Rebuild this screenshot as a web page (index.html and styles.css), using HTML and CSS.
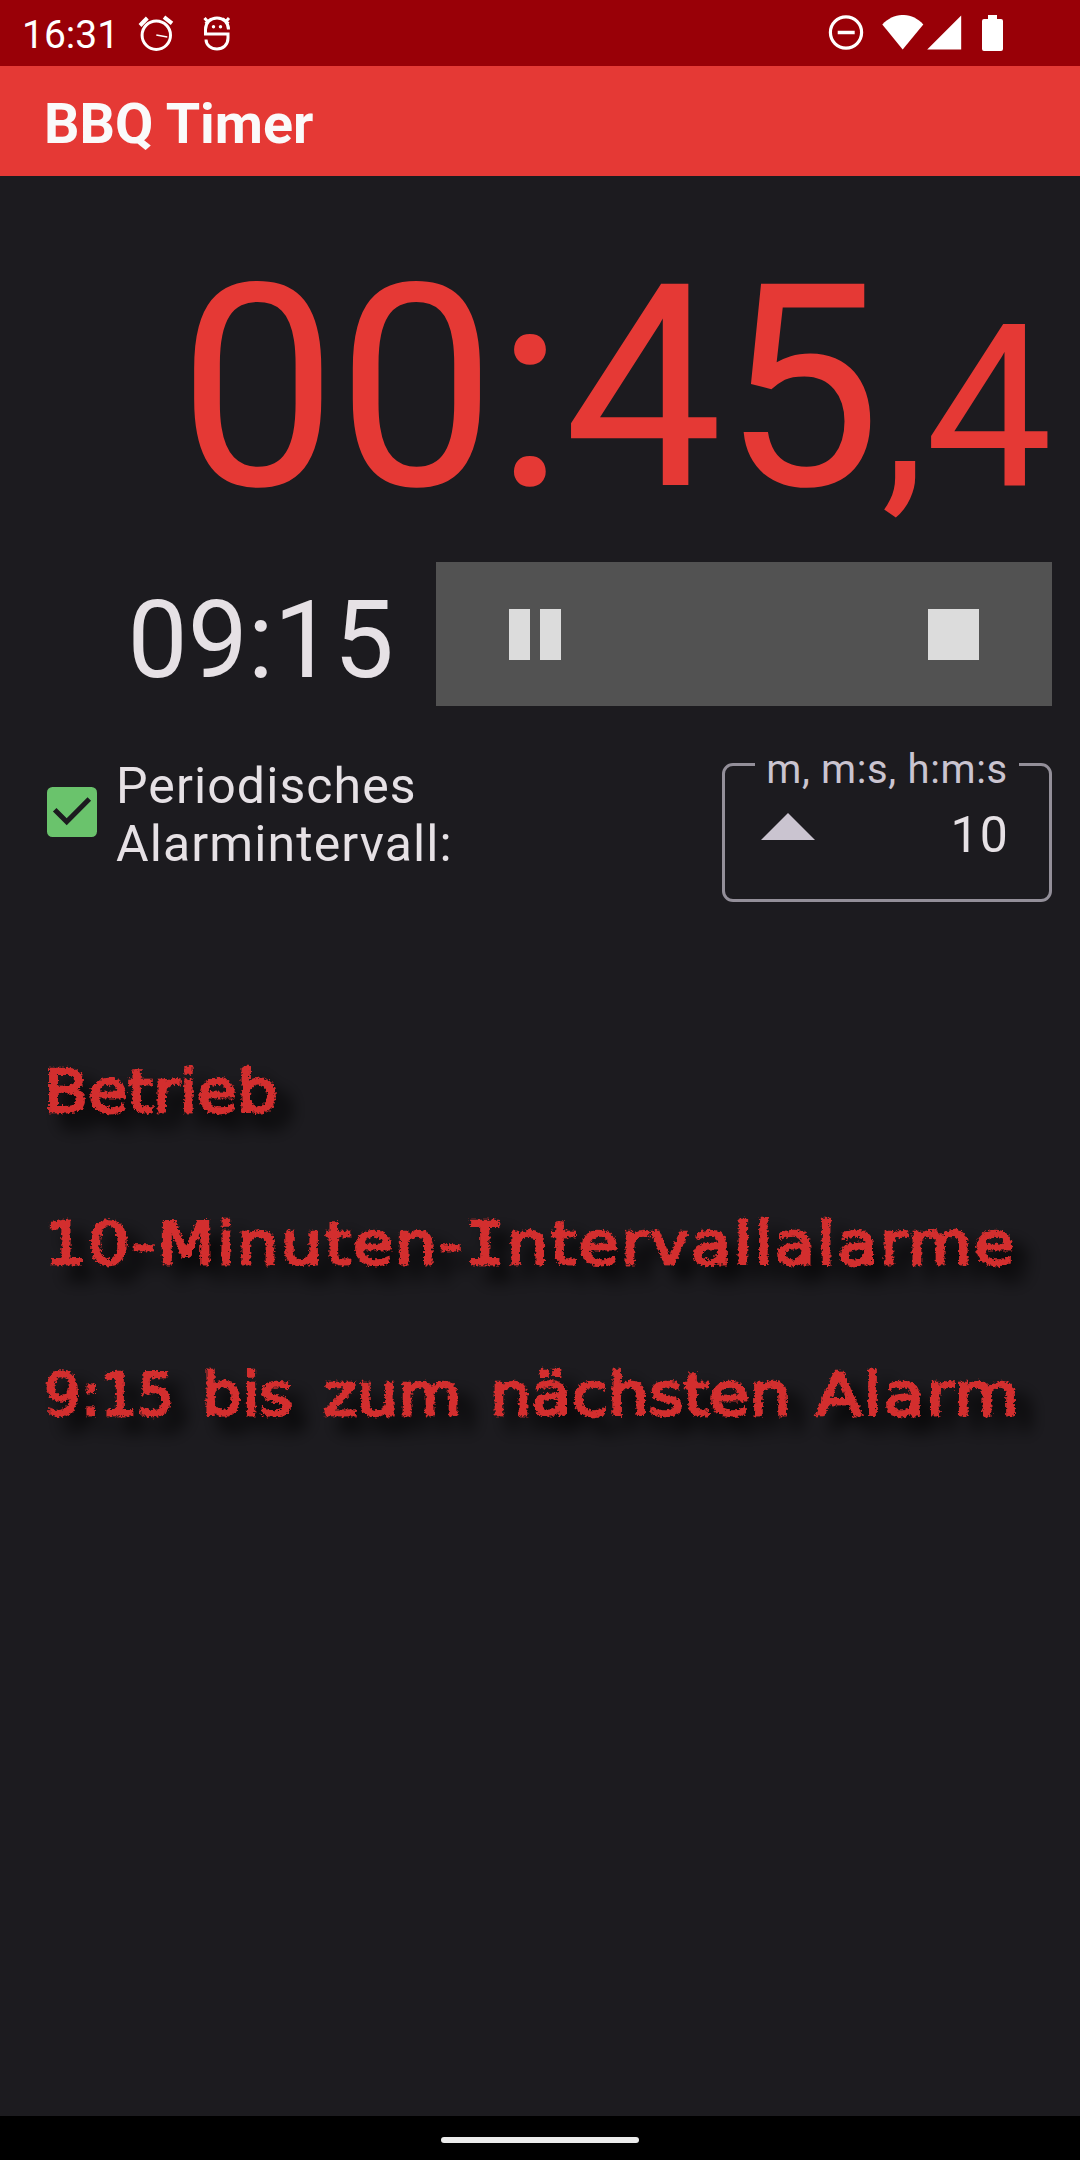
FILE: index.html
```html
<!DOCTYPE html>
<html lang="de">
<head>
<meta charset="utf-8">
<title>BBQ Timer</title>
<link rel="stylesheet" href="styles.css">
</head>
<body>
<div class="status-bar">
  <span class="clock">16:31</span>
  <svg class="icon-alarm" width="36" height="38" viewBox="0 0 36 38" fill="none" stroke="#fff">
    <circle cx="18.3" cy="20.2" r="14.2" stroke-width="3"/>
    <path d="M2 10.5 9.3 3M26 2.2l8 6.2" stroke-width="4"/>
    <path d="m18.3 20 11 2" stroke-width="1.6"/>
  </svg>
  <svg class="icon-face" width="28" height="38" viewBox="0 0 28 38" fill="none" stroke="#fff" stroke-width="3">
    <path d="M25.5 14.5C25.5 7.5 20.500 3 14 3S2.500 7.500 2.500 14.500V19H25V23C25 30 20 34 14 34S3 30 3 24.500M1.500 3 5 7M26 3l-3.500 4"/>
    <path d="M2 8.300 8 3.200M20 3.200l6 5" stroke-width="1.500"/>
    <circle cx="10.500" cy="11.700" r="1.700" fill="#fff" stroke="none"/>
    <circle cx="17.500" cy="11.700" r="1.700" fill="#fff" stroke="none"/>
  </svg>
  <svg class="icon-dnd" width="36" height="36" viewBox="0 0 36 36" fill="none" stroke="#fff" stroke-width="3.2">
    <circle cx="18" cy="17.500" r="15.6"/><path d="M9.700 17.500h17" stroke-width="3.500"/>
  </svg>
  <svg class="icon-wifi" width="42" height="35" viewBox="0 0 42 35" fill="#fff"><path d="M.3 9.500C12-3.200 30-3.200 41.300 9.500L20.700 34.500Z"/></svg>
  <svg class="icon-signal" width="35" height="35" viewBox="0 0 35 35" fill="#fff"><path d="M34.200.5V34.500H.2Z"/></svg>
  <svg class="icon-battery" width="21" height="36" viewBox="0 0 21 36" fill="#fff"><path d="M6 0h9v4h4q2 0 2 2v28q0 2-2 2H2q-2 0-2-2V6q0-2 2-2h4Z"/></svg>
</div>
<header class="app-bar"><h1>BBQ Timer</h1></header>
<main>
  <div class="stopwatch">00:45<span class="tenths">,4</span></div>
  <div class="countdown-row">
    <div class="countdown">09:15</div>
    <div class="controls">
      <svg width="52" height="51" viewBox="0 0 52 51" fill="#dcdcdc"><path d="M0 0h21v51H0zM31 0h21v51H31z"/></svg>
      <svg width="51" height="51" viewBox="0 0 51 51" fill="#dcdcdc"><path d="M0 0h51v51H0z"/></svg>
    </div>
  </div>
  <div class="interval-row">
    <svg class="checkbox" width="50" height="50" viewBox="0 0 50 50">
      <rect width="50" height="50" rx="5.500" fill="#6ac36c"/>
      <path d="M7.700 22.700 19.700 34.700 42.300 12" fill="none" stroke="#1c1b1f" stroke-width="5"/>
    </svg>
    <div class="interval-label">Periodisches<br>Alarmintervall:</div>
    <div class="interval-field">
      <span class="field-label">m, m:s, h:m:s</span>
      <svg width="54" height="27" viewBox="0 0 54 27" fill="#cac4d0"><path d="M27 0 54 27H0Z"/></svg>
      <span class="field-value">10</span>
    </div>
  </div>
  <div class="notes">
    <p><span class="w1">Betrieb</span></p>
    <p><span class="w2">10-Minuten-<span class="slab">I</span>ntervallalarme</span></p>
    <p><span class="w3">9:15</span><span class="w4">bis</span><span class="w5">zum</span><span class="w6">nächsten</span><span class="w7">Alarm</span></p>
  </div>
</main>
<div class="nav-bar"><div class="nav-pill"></div></div>
<svg class="defs" width="0" height="0">
  <filter id="chalk" x="-5%" y="-30%" width="110%" height="180%">
    <feTurbulence type="fractalNoise" baseFrequency="0.35" numOctaves="2" seed="4" result="grain"/>
    <feDisplacementMap in="SourceGraphic" in2="grain" scale="6" xChannelSelector="R" yChannelSelector="G" result="rough"/>
    <feDropShadow in="rough" dx="14" dy="14" stdDeviation="8.500" flood-color="#000" flood-opacity="1"/>
  </filter>
</svg>
</body>
</html>
```
FILE: styles.css
```css
* { box-sizing: border-box; }
body {
  margin: 0;
  width: 1080px;
  height: 2160px;
  display: flex;
  flex-direction: column;
  overflow: hidden;
  background: #1c1b1f;
  color: #e6e1e5;
  font-family: Roboto, sans-serif;
}
svg { display: block; flex: none; }
.status-bar {
  height: 66px;
  flex: none;
  display: flex;
  align-items: flex-start;
  padding: 15px 77px 0 22px;
  background: #990007;
  color: #fff;
}
.clock { width: 116px; font-size: 39px; line-height: 40px; }
.icon-face { margin-left: 29px; }
.icon-dnd { margin-left: auto; }
.icon-wifi { margin-left: 18px; }
.icon-signal { margin-left: 3px; }
.icon-battery { margin-left: 20px; }
.app-bar {
  height: 110px;
  flex: none;
  padding: 3px 0 0 44px;
  background: #e53935;
}
h1 {
  margin: 0;
  color: #fafafa;
  font-size: 55.6px;
  font-weight: 700;
  line-height: 110px;
}
main { flex: 1; padding: 42px 28px 0 44px; }
.stopwatch {
  height: 344px;
  text-align: right;
  white-space: nowrap;
  color: #e53935;
  font-size: 283px;
  line-height: 340px;
  letter-spacing: -0.4px;
}
.tenths { font-size: 226.4px; line-height: 1; }
.countdown-row { display: flex; justify-content: flex-end; height: 144px; }
.countdown { margin-right: 42px; padding-top: 7px; font-size: 107px; line-height: 144px; }
.controls {
  width: 616px;
  display: flex;
  align-items: center;
  justify-content: space-between;
  padding: 0 73px 0 73px;
  background: #525252;
}
.interval-row {
  display: flex;
  align-items: flex-start;
  height: 198px;
  padding-top: 51px;
}
.checkbox { margin: 30px 0 0 3px; }
.interval-label { margin-left: 19px; font-size: 50px; line-height: 58px; letter-spacing: 1.1px; }
.interval-field {
  position: relative;
  display: flex;
  align-items: flex-start;
  justify-content: space-between;
  width: 330px;
  height: 139px;
  margin: 6px 0 0 auto;
  padding: 47px 40px 0 36px;
  border: 3px solid #938f99;
  border-radius: 11px;
}
.field-label {
  position: absolute;
  top: -16px;
  right: 30px;
  width: 264px;
  text-align: center;
  background: #1c1b1f;
  color: #cac4d0;
  font-size: 40px;
  line-height: 40px;
  letter-spacing: 0.65px;
  white-space: nowrap;
}
.field-value { margin-top: -7px; font-size: 50px; line-height: 58px; letter-spacing: 1.1px; }
.notes {
  padding-top: 138px;
  color: #d32f2f;
  font-family: "DejaVu Sans", sans-serif;
  font-size: 58px;
  -webkit-text-stroke: 2.3px #d32f2f;
}
.notes p {
  display: flex;
  margin: 0;
  height: 151.5px;
  line-height: 100px;
  white-space: nowrap;
  filter: url(#chalk);
}
.slab { font-family: "DejaVu Sans Mono", monospace; }
.notes span[class^="w"] { flex: none; transform-origin: 0 50%; }
.notes .w1 { transform: scaleX(1.11); }
.notes .w2 { transform: scaleX(1.13); letter-spacing: 2px; }
.notes .w3 { width: 158px; }
.notes .w4 { width: 121px; transform: scaleX(1.09); }
.notes .w5 { width: 167px; transform: scaleX(1.12); }
.notes .w6 { width: 326px; transform: scaleX(1.13); }
.notes .w7 { transform: scaleX(1.15); letter-spacing: 1.5px; }
.nav-bar {
  height: 44px;
  flex: none;
  display: flex;
  justify-content: center;
  padding-top: 21px;
  background: #000;
}
.nav-pill { width: 198px; height: 6px; border-radius: 3px; background: #ececec; }
.defs { position: absolute; }
```
